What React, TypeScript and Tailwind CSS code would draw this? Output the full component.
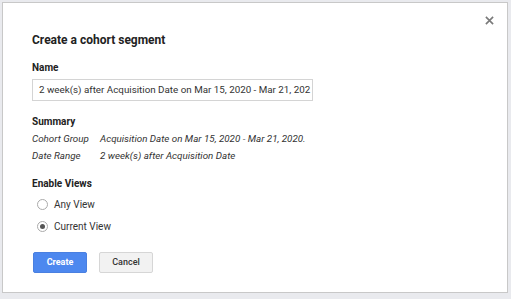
import React from "react";

export default function App() {
  return (
    <div className="w-[511px] h-[299px] bg-[#e9eaee] pt-[2px] pl-[2px] overflow-hidden" style={{ fontFamily: "Roboto, 'Liberation Sans', sans-serif" }}>
      <div className="relative w-[506px] h-[291px] bg-white border border-[#c8c8c8] pl-[29px] pt-[29px] text-[#222]">
        <button className="absolute right-[11px] top-[10px] w-[14px] h-[14px] flex items-center justify-center">
          <svg width="9" height="9" viewBox="0 0 10 10"><path d="M1 1L9 9M9 1L1 9" stroke="#7a7a7a" strokeWidth="1.8" /></svg>
        </button>
        <div className="text-[12px] font-bold leading-[16px] text-[#222]">Create a cohort segment</div>
        <div className="mt-[14px] text-[10px] font-bold leading-[12px]">Name</div>
        <div className="mt-[5px] w-[281px] h-[22px] border border-[#d4d4d4] flex items-center pl-[6px] text-[9.8px] text-[#333] overflow-hidden whitespace-nowrap">
          2 week(s) after Acquisition Date on Mar 15, 2020 - Mar 21, 202
        </div>
        <div className="mt-[15px] text-[10px] font-bold leading-[12px]">Summary</div>
        <div className="mt-[4px] text-[9.8px] italic leading-[14px] text-[#333] flex">
          <span className="w-[68px] shrink-0">Cohort Group</span>
          <span>Acquisition Date on Mar 15, 2020 - Mar 21, 2020.</span>
        </div>
        <div className="mt-[3px] text-[9.8px] italic leading-[14px] text-[#333] flex">
          <span className="w-[68px] shrink-0">Date Range</span>
          <span>2 week(s) after Acquisition Date</span>
        </div>
        <div className="mt-[15px] text-[10px] font-bold leading-[12px]">Enable Views</div>
        <div className="mt-[6px] ml-[5px] flex items-center h-[16px] text-[10px] text-[#333]">
          <span className="w-[11px] h-[11px] rounded-full border border-[#aaa] bg-white mr-[6px]"></span>
          Any View
        </div>
        <div className="mt-[6px] ml-[5px] flex items-center h-[16px] text-[10px] text-[#333]">
          <span className="w-[11px] h-[11px] rounded-full border border-[#aaa] bg-white mr-[6px] flex items-center justify-center">
            <span className="w-[5px] h-[5px] rounded-full bg-[#555]"></span>
          </span>
          Current View
        </div>
        <div className="mt-[18px] ml-[1px] flex gap-[12px]">
          <button className="w-[54px] h-[21px] bg-[#4d88ef] text-white text-[9px] font-bold rounded-[2px] border border-[#4a80e0]">Create</button>
          <button className="w-[54px] h-[21px] bg-[#f2f2f2] text-[#333] text-[9px] font-medium rounded-[2px] border border-[#d6d6d6]">Cancel</button>
        </div>
      </div>
    </div>
  );
}
